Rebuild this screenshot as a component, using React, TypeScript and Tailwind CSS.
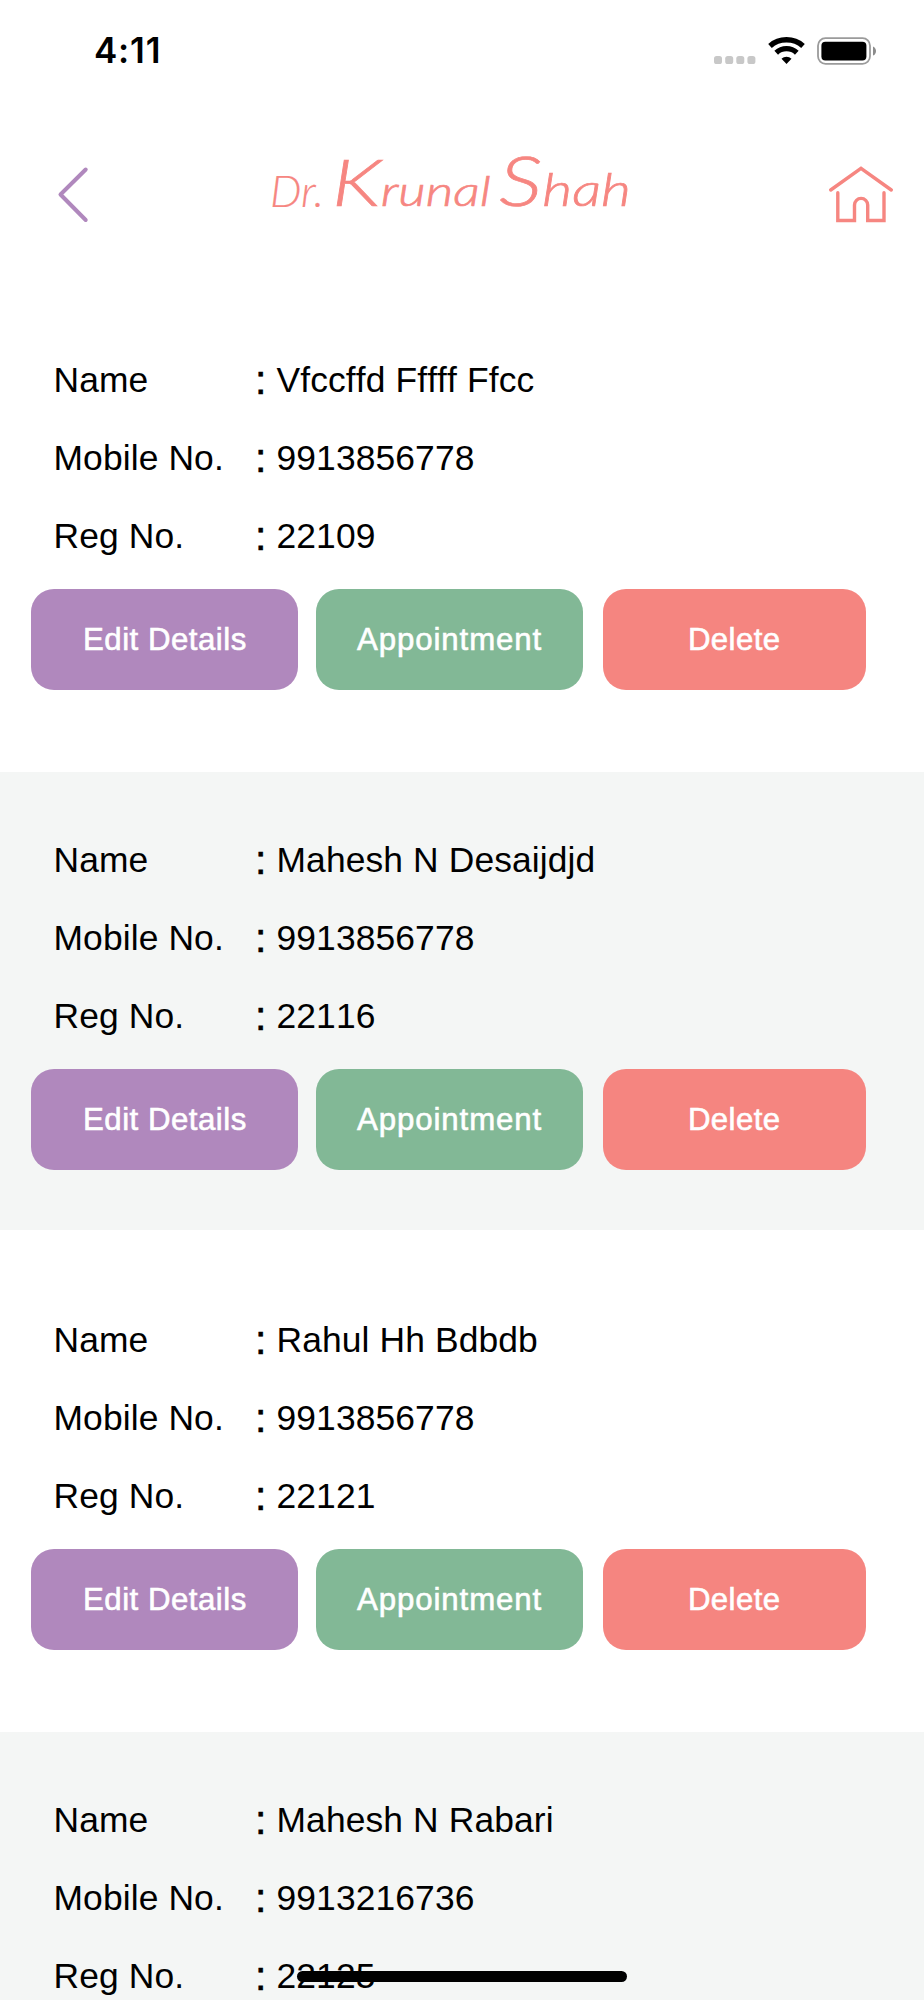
const patients = [
  { name: "Vfccffd Fffff Ffcc", mobile: "9913856778", reg: "22109" },
  { name: "Mahesh N Desaijdjd", mobile: "9913856778", reg: "22116" },
  { name: "Rahul Hh Bdbdb", mobile: "9913856778", reg: "22121" },
  { name: "Mahesh N Rabari", mobile: "9913216736", reg: "22125" },
];

function StatusBar() {
  return (
    <div className="flex h-[101px] shrink-0 items-center pl-[94px] pr-[47px]">
      <span className="font-['Inter'] text-[35px] font-semibold leading-none tracking-[0.8px]">4:11</span>
      <div className="ml-auto flex items-center">
        <svg width="42" height="28" viewBox="0 0 42 28" fill="#c8c8c8">
          <rect x="0" y="19" width="8" height="8" rx="2.6" />
          <rect x="11.2" y="19" width="8" height="8" rx="2.6" />
          <rect x="22.3" y="19" width="8" height="8" rx="2.6" />
          <rect x="33.4" y="19" width="8" height="8" rx="2.6" />
        </svg>
        <svg className="ml-[12px]" width="37" height="28" viewBox="0 0 37 28">
          <g fill="none" stroke="#000" strokeWidth="5.4">
            <path d="M2 8.9C11.2 0.7 25.8 0.7 35 8.9" />
            <path d="M8.2 15.7C14 10.3 23 10.3 28.8 15.7" />
          </g>
          <path d="M13.5 21.8c2.7-2.7 7.3-2.7 10 0L18.5 27z" />
        </svg>
        <svg className="ml-[12px]" width="60" height="28" viewBox="0 0 60 28">
          <rect x="1" y="1.2" width="52" height="25.6" rx="7.5" fill="none" stroke="#9b9b9b" strokeWidth="1.8" />
          <rect x="4.4" y="4.8" width="45" height="18.6" rx="4" />
          <path d="M56 9.4c4 1.6 4 7.6 0 9.2z" fill="#8c8c8c" />
        </svg>
      </div>
    </div>
  );
}

function Wordmark() {
  return (
    <svg
      width="364"
      height="64"
      viewBox="0 0 364 64"
      fill="#f68681"
      stroke="#f68681"
      strokeWidth="0.7"
      className="overflow-visible font-['Lato'] font-light italic"
    >
      <text x="2" y="56" fontSize="43" strokeWidth="0.2" textLength="54" lengthAdjust="spacingAndGlyphs">Dr.</text>
      <text x="64" y="55" fontSize="65" textLength="159" lengthAdjust="spacingAndGlyphs">
        K<tspan fontSize="42">runal</tspan>
      </text>
      <text x="231" y="55" fontSize="69" textLength="132" lengthAdjust="spacingAndGlyphs">
        S<tspan fontSize="46">hah</tspan>
      </text>
    </svg>
  );
}

function Header() {
  return (
    <header className="flex h-[191px] shrink-0 items-start pl-[56px] pr-[30px]">
      <svg className="mt-[65px]" width="34" height="58" viewBox="0 0 34 58" fill="none" stroke="#b088bd" strokeWidth="4" strokeLinecap="round" strokeLinejoin="round">
        <path d="M29.7 3.5L4.5 28.5L29.7 54" />
      </svg>
      <div className="ml-[178px] mt-[50px]">
        <Wordmark />
      </div>
      <svg className="ml-auto mt-[64px]" width="66" height="60" viewBox="0 0 66 60" fill="none" stroke="#f68681" strokeWidth="3.4" strokeLinecap="round" strokeLinejoin="miter">
        <path d="M2.7 25L33 3.3L63.3 25" />
        <path d="M9.8 27.8V55.5H26.5V40a6.6 6.6 0 0 1 13.2 0V55.5H56V27.8" />
      </svg>
    </header>
  );
}

function Field({ label, value }: { label: string; value: string }) {
  return (
    <div className="flex h-[78px] items-center pl-[53.5px] text-[35.4px] leading-[78px] tracking-[0.12px] [font-kerning:none]">
      <span className="w-[201.5px] whitespace-nowrap">{label}</span>
      <span className="w-[21.5px] text-[41px] leading-[78px] [-webkit-text-stroke:0.6px_#000]">:</span>
      <span className="whitespace-nowrap">{value}</span>
    </div>
  );
}

function PatientRow({ name, mobile, reg, shaded }: { name: string; mobile: string; reg: string; shaded: boolean }) {
  const button =
    "h-[100.5px] rounded-[23px] pt-[3px] text-[31.2px] text-white [-webkit-text-stroke:0.6px_#fff]";
  return (
    <li className={`mb-[22px] h-[458px] shrink-0 pt-[49px] ${shaded ? "bg-[#f4f6f5]" : "bg-white"}`}>
      <Field label="Name" value={name} />
      <Field label="Mobile No." value={mobile} />
      <Field label="Reg No." value={reg} />
      <div className="mt-[14px] flex pl-[31.3px]">
        <button className={`${button} w-[267.2px] bg-[#b088bd] tracking-[0.5px]`}>Edit Details</button>
        <button className={`${button} ml-[17.6px] w-[267px] bg-[#82b896] tracking-[0.9px]`}>Appointment</button>
        <button className={`${button} ml-[19.5px] w-[263.3px] bg-[#f58580] tracking-[0.4px]`}>Delete</button>
      </div>
    </li>
  );
}

export default function App() {
  return (
    <div className="relative flex h-[2000px] w-[924px] flex-col overflow-hidden bg-white font-['Liberation_Sans',Arial,sans-serif] text-black">
      <StatusBar />
      <Header />
      <ul className="flex flex-col">
        {patients.map((p, i) => (
          <PatientRow key={p.reg} {...p} shaded={i % 2 === 1} />
        ))}
      </ul>
      <div className="absolute bottom-[18px] left-[297px] h-[11px] w-[330px] rounded-full bg-black" />
    </div>
  );
}
